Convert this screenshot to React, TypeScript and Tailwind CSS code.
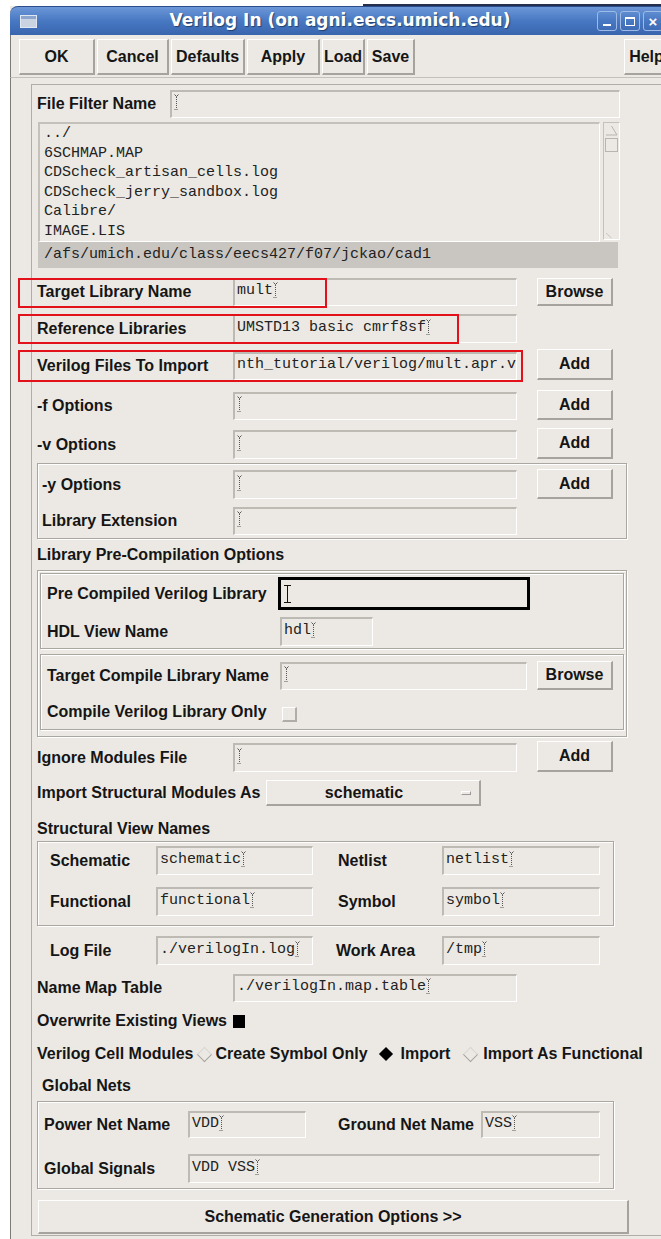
import React from "react";

const sans = "font-['Liberation_Sans',Arial,sans-serif]";
const mono = "font-['Liberation_Mono','Courier_New',monospace]";
const label = "text-[16px] font-bold text-[#151515] leading-[20px] whitespace-nowrap";

// dotted X11 text cursor shown after the value of an entry field
function Caret() {
  return (
    <svg width="5" height="16" viewBox="0 0 5 16" className="shrink-0 -mt-[2px]">
      <path d="M0.5 0.5 L2.5 2.5 L4.5 0.5" stroke="#555" fill="none" strokeWidth="1" />
      <line x1="2.5" y1="3" x2="2.5" y2="14" stroke="#555" strokeDasharray="1 1" />
      <line x1="0.5" y1="15.5" x2="4.5" y2="15.5" stroke="#555" strokeDasharray="1 1" />
    </svg>
  );
}

function Field({ value = "", className = "" }: { value?: string; className?: string }) {
  return (
    <div
      className={`flex items-center shrink-0 overflow-hidden pl-[2px] pb-[3px] border-t-2 border-l-2 border-t-[#bdbab4] border-l-[#bdbab4] border-b border-r border-b-white border-r-white ${mono} text-[15px] leading-[18px] text-[#222] whitespace-pre ${className}`}
    >
      {value && <span>{value}</span>}
      <Caret />
    </div>
  );
}

function Btn({ children, className = "" }: { children: React.ReactNode; className?: string }) {
  return (
    <div
      className={`flex items-center justify-center shrink-0 border-t border-l border-white border-b-2 border-r-2 border-b-[#a6a39e] border-r-[#a6a39e] bg-[#ece9e4] ${label} ${className}`}
    >
      {children}
    </div>
  );
}

function Group({ children, className = "" }: { children: React.ReactNode; className?: string }) {
  return (
    <div className={`border border-[#aaa7a1] shadow-[inset_1px_1px_0_#fff,1px_1px_0_#fff] ${className}`}>
      {children}
    </div>
  );
}

function RedBox({ className }: { className: string }) {
  return <div className={`absolute border-2 border-[#e3121a] pointer-events-none ${className}`} />;
}

// radio button of the Motif kind: a small diamond
function Diamond({ on }: { on?: boolean }) {
  return (
    <span className="w-[16px] h-[16px] flex items-center justify-center shrink-0">
      {on ? (
        <span className="w-[10px] h-[10px] bg-black rotate-45" />
      ) : (
        <span className="w-[11px] h-[11px] rotate-45 border-t border-l border-[#d8d5d0] border-b border-r border-b-[#a4a19b] border-r-[#a4a19b]" />
      )}
    </span>
  );
}

function TitleBar() {
  return (
    <div className="grid grid-cols-[1fr_auto_1fr] items-center h-[29px] rounded-tl-[8px] bg-linear-to-b from-[#6c97d8] via-[#4878c2] to-[#3965ae] border-t border-[#2b4c88]">
      <div className="pl-[10px]">
        <div className="w-[17px] h-[13px] border border-[#dfe7f3] bg-[#c9d3e2] shadow-[inset_0_3px_0_#8aa6cf]" />
      </div>
      <div className="font-['DejaVu_Sans',sans-serif] font-bold text-[17px] text-white [text-shadow:1px_1px_1px_#23406f]">
        Verilog In (on agni.eecs.umich.edu)
      </div>
      <div className="flex justify-end gap-[3px] pr-[7px]">
        <div className="w-[20px] h-[20px] rounded-[3px] border border-[#9dbbe6] flex items-end justify-center pb-[4px]">
          <div className="w-[8px] h-[2px] bg-white" />
        </div>
        <div className="w-[20px] h-[20px] rounded-[3px] border border-[#9dbbe6] flex items-center justify-center">
          <div className="w-[10px] h-[9px] border border-white border-t-2" />
        </div>
        <div className="w-[20px] h-[20px] rounded-[3px] border border-[#9dbbe6] flex items-center justify-center text-white font-bold text-[15px] leading-none">
          ×
        </div>
      </div>
    </div>
  );
}

function Toolbar() {
  return (
    <div className="h-[43px] border-b border-[#c4c1bc] flex pt-[4px] pl-[8px] gap-[2px] border-l border-l-[#7d7b78]">
      <Btn className="w-[76px] h-[36px]">OK</Btn>
      <Btn className="w-[72px] h-[36px]">Cancel</Btn>
      <Btn className="w-[74px] h-[36px]">Defaults</Btn>
      <Btn className="w-[73px] h-[36px]">Apply</Btn>
      <Btn className="w-[43px] h-[36px]">Load</Btn>
      <Btn className="w-[48px] h-[36px]">Save</Btn>
      <Btn className="w-[46px] h-[36px] ml-auto">Help</Btn>
    </div>
  );
}

const files = ["../", "6SCHMAP.MAP", "CDScheck_artisan_cells.log", "CDScheck_jerry_sandbox.log", "Calibre/", "IMAGE.LIS"];

function FileBrowser() {
  return (
    <>
      <div className="flex items-center mt-[5px] h-[28px]">
        <span className={`${label} w-[133px]`}>File Filter Name</span>
        <Field className="w-[450px] h-[28px]" />
      </div>
      <div className="flex mt-[4px] ml-[1px] h-[120px]">
        <div className={`w-[562px] border-t-2 border-l-2 border-[#c4c1bb] border-b border-r border-b-white border-r-white pl-[4px] ${mono} text-[15px] leading-[19.5px] text-[#222] overflow-hidden`}>
          {files.map((f) => (
            <div key={f}>{f}</div>
          ))}
        </div>
        <div className="w-[17px] ml-[3px] h-[118px] border border-[#c4c1bb] border-r-white border-b-white">
          <svg width="15" height="116" viewBox="0 0 15 116">
            <path d="M7.5 3 L13 12 L2 12" fill="none" stroke="#b8b5b0" />
            <rect x="1.5" y="15.5" width="12" height="13" fill="none" stroke="#b8b5b0" />
            <path d="M2 110 L7.5 115" fill="none" stroke="#c8c5c0" />
          </svg>
        </div>
      </div>
      <div className={`ml-[1px] w-[580px] h-[26px] bg-[#c9c6c1] pl-[6px] flex items-center ${mono} text-[15px] text-[#222]`}>
        /afs/umich.edu/class/eecs427/f07/jckao/cad1
      </div>
    </>
  );
}

export default function App() {
  return (
    <div className={`w-[661px] h-[1239px] overflow-hidden bg-white ${sans}`}>
      <div className="flex h-[6px]">
        <div className="w-[363px]" />
        <div className="flex-1 border-b-2 border-[#22304d]" />
      </div>
      <div className="ml-[10px] w-[660px] bg-[#ece9e4]">
        <TitleBar />
        <Toolbar />
        <div className="border-l border-[#7d7b78] pt-[6px] h-[1161px]">
          <div className="ml-[20px] border border-[#b0ada8] pl-[5px] pb-[1px] h-[1152px]">
            <FileBrowser />

            {/* library / file entries */}
            <div className="relative flex items-center mt-[10px] h-[28px]">
              <RedBox className="-left-[19px] top-0 w-[309px] h-[30px]" />
              <span className={`${label} w-[196px]`}>Target Library Name</span>
              <Field value="mult" className="w-[284px] h-[28px]" />
              <Btn className="ml-[20px] w-[76px] h-[28px]">Browse</Btn>
            </div>
            <div className="relative flex items-center mt-[8px] h-[29px]">
              <RedBox className="-left-[19px] top-0 w-[441px] h-[30px]" />
              <span className={`${label} w-[196px]`}>Reference Libraries</span>
              <Field value="UMSTD13 basic cmrf8sf" className="w-[284px] h-[29px]" />
            </div>
            <div className="relative flex items-center mt-[9px] h-[28px]">
              <RedBox className="-left-[19px] -top-[2px] w-[505px] h-[32px]" />
              <span className={`${label} w-[196px]`}>Verilog Files To Import</span>
              <Field value="nth_tutorial/verilog/mult.apr.v" className="w-[284px] h-[28px]" />
              <Btn className="ml-[20px] w-[76px] h-[31px] self-end">Add</Btn>
            </div>
            <div className="flex items-center mt-[12px] h-[28px]">
              <span className={`${label} w-[196px]`}>-f Options</span>
              <Field className="w-[284px] h-[28px]" />
              <Btn className="ml-[20px] w-[76px] h-[30px] self-end">Add</Btn>
            </div>
            <div className="flex items-center mt-[10px] h-[29px]">
              <span className={`${label} w-[196px]`}>-v Options</span>
              <Field className="w-[284px] h-[29px]" />
              <Btn className="ml-[20px] w-[76px] h-[31px] self-end">Add</Btn>
            </div>

            <Group className="mt-[4px] w-[590px] pl-[4px] pt-[6px] pb-[3px]">
              <div className="flex items-center h-[29px]">
                <span className={`${label} w-[191px]`}>-y Options</span>
                <Field className="w-[284px] h-[29px]" />
                <Btn className="ml-[20px] w-[76px] h-[30px] self-end">Add</Btn>
              </div>
              <div className="flex items-center mt-[8px] h-[28px]">
                <span className={`${label} w-[191px]`}>Library Extension</span>
                <Field className="w-[284px] h-[28px]" />
              </div>
            </Group>

            <div className={`${label} mt-[6px]`}>Library Pre-Compilation Options</div>

            <Group className="mt-[5px] w-[590px] px-[2px] pt-[2px] pb-[6px]">
              <Group className="pl-[6px] pt-[3px] pb-[2px]">
                <div className="flex items-center h-[33px]">
                  <span className={`${label} w-[231px]`}>Pre Compiled Verilog Library</span>
                  <div className="w-[252px] h-[33px] border-[3px] border-black flex items-center pl-[3px]">
                    <svg width="7" height="18" viewBox="0 0 7 18">
                      <path d="M0 0.5 H7 M3.5 0.5 V17.5 M0 17.5 H7" stroke="#111" strokeWidth="1" fill="none" />
                    </svg>
                  </div>
                </div>
                <div className="flex items-center mt-[7px] h-[29px]">
                  <span className={`${label} w-[233px]`}>HDL View Name</span>
                  <Field value="hdl" className="w-[93px] h-[29px]" />
                </div>
              </Group>
              <Group className="mt-[5px] pl-[6px] pt-[7px] pb-[7px]">
                <div className="flex items-center h-[28px]">
                  <span className={`${label} w-[233px]`}>Target Compile Library Name</span>
                  <Field className="w-[247px] h-[28px]" />
                  <Btn className="ml-[10px] w-[76px] h-[29px] self-end">Browse</Btn>
                </div>
                <div className="flex items-center mt-[12px] h-[20px]">
                  <span className={`${label} w-[235px]`}>Compile Verilog Library Only</span>
                  <div className="w-[15px] h-[15px] border-t border-l border-white border-b-2 border-r-2 border-b-[#b0ada8] border-r-[#b0ada8] mt-[4px]" />
                </div>
              </Group>
            </Group>

            <div className="flex items-center mt-[6px] h-[29px]">
              <span className={`${label} w-[196px]`}>Ignore Modules File</span>
              <Field className="w-[284px] h-[29px]" />
              <Btn className="ml-[20px] w-[76px] h-[31px] self-end">Add</Btn>
            </div>
            <div className="flex items-center mt-[8px] h-[26px]">
              <span className={`${label} w-[229px]`}>Import Structural Modules As</span>
              <div className="w-[215px] h-[26px] flex items-center border-t border-l border-white border-b-2 border-r-2 border-b-[#a6a39e] border-r-[#a6a39e]">
                <span className={`${label} flex-1 text-center`}>schematic</span>
                <div className="w-[10px] h-[4px] mr-[8px] border-t border-l border-white border-b border-r border-b-[#999] border-r-[#999]" />
              </div>
            </div>

            <div className={`${label} mt-[13px]`}>Structural View Names</div>
            <Group className="mt-[2px] w-[577px] pl-[12px] pt-[4px] pb-[9px]">
              <div className="flex items-center h-[29px]">
                <span className={`${label} w-[106px]`}>Schematic</span>
                <Field value="schematic" className="w-[157px] h-[29px]" />
                <span className={`${label} ml-[25px] w-[104px]`}>Netlist</span>
                <Field value="netlist" className="w-[158px] h-[29px]" />
              </div>
              <div className="flex items-center mt-[12px] h-[29px]">
                <span className={`${label} w-[106px]`}>Functional</span>
                <Field value="functional" className="w-[157px] h-[29px]" />
                <span className={`${label} ml-[25px] w-[104px]`}>Symbol</span>
                <Field value="symbol" className="w-[158px] h-[29px]" />
              </div>
            </Group>

            <div className="flex items-center mt-[10px] pl-[13px] h-[29px]">
              <span className={`${label} w-[106px]`}>Log File</span>
              <Field value="./verilogIn.log" className="w-[157px] h-[29px]" />
              <span className={`${label} ml-[23px] w-[106px]`}>Work Area</span>
              <Field value="/tmp" className="w-[158px] h-[29px]" />
            </div>
            <div className="flex items-center mt-[9px] h-[28px]">
              <span className={`${label} w-[196px]`}>Name Map Table</span>
              <Field value="./verilogIn.map.table" className="w-[284px] h-[28px]" />
            </div>

            <div className="flex items-center mt-[9px] h-[20px]">
              <span className={label}>Overwrite Existing Views</span>
              <span className="w-[12px] h-[13px] bg-black ml-[6px]" />
            </div>
            <div className="flex items-center mt-[13px] h-[20px]">
              <span className={label}>Verilog Cell Modules</span>
              <span className="ml-[3px]"><Diamond /></span>
              <span className={`${label} ml-[3px]`}>Create Symbol Only</span>
              <span className="ml-[10px]"><Diamond on /></span>
              <span className={`${label} ml-[7px]`}>Import</span>
              <span className="ml-[12px]"><Diamond /></span>
              <span className={`${label} ml-[5px]`}>Import As Functional</span>
            </div>

            <div className={`${label} mt-[12px] pl-[5px]`}>Global Nets</div>
            <Group className="mt-[5px] w-[577px] pl-[6px] pt-[9px] pb-[5px]">
              <div className="flex items-center h-[27px]">
                <span className={`${label} w-[144px]`}>Power Net Name</span>
                <Field value="VDD" className="w-[118px] h-[27px]" />
                <span className={`${label} ml-[32px] w-[143px]`}>Ground Net Name</span>
                <Field value="VSS" className="w-[119px] h-[27px]" />
              </div>
              <div className="flex items-center mt-[16px] h-[29px]">
                <span className={`${label} w-[144px]`}>Global Signals</span>
                <Field value="VDD VSS" className="w-[412px] h-[29px]" />
              </div>
            </Group>

            <Btn className="mt-[11px] ml-[1px] w-[591px] h-[34px]">Schematic Generation Options &gt;&gt;</Btn>
          </div>
        </div>
      </div>
    </div>
  );
}
